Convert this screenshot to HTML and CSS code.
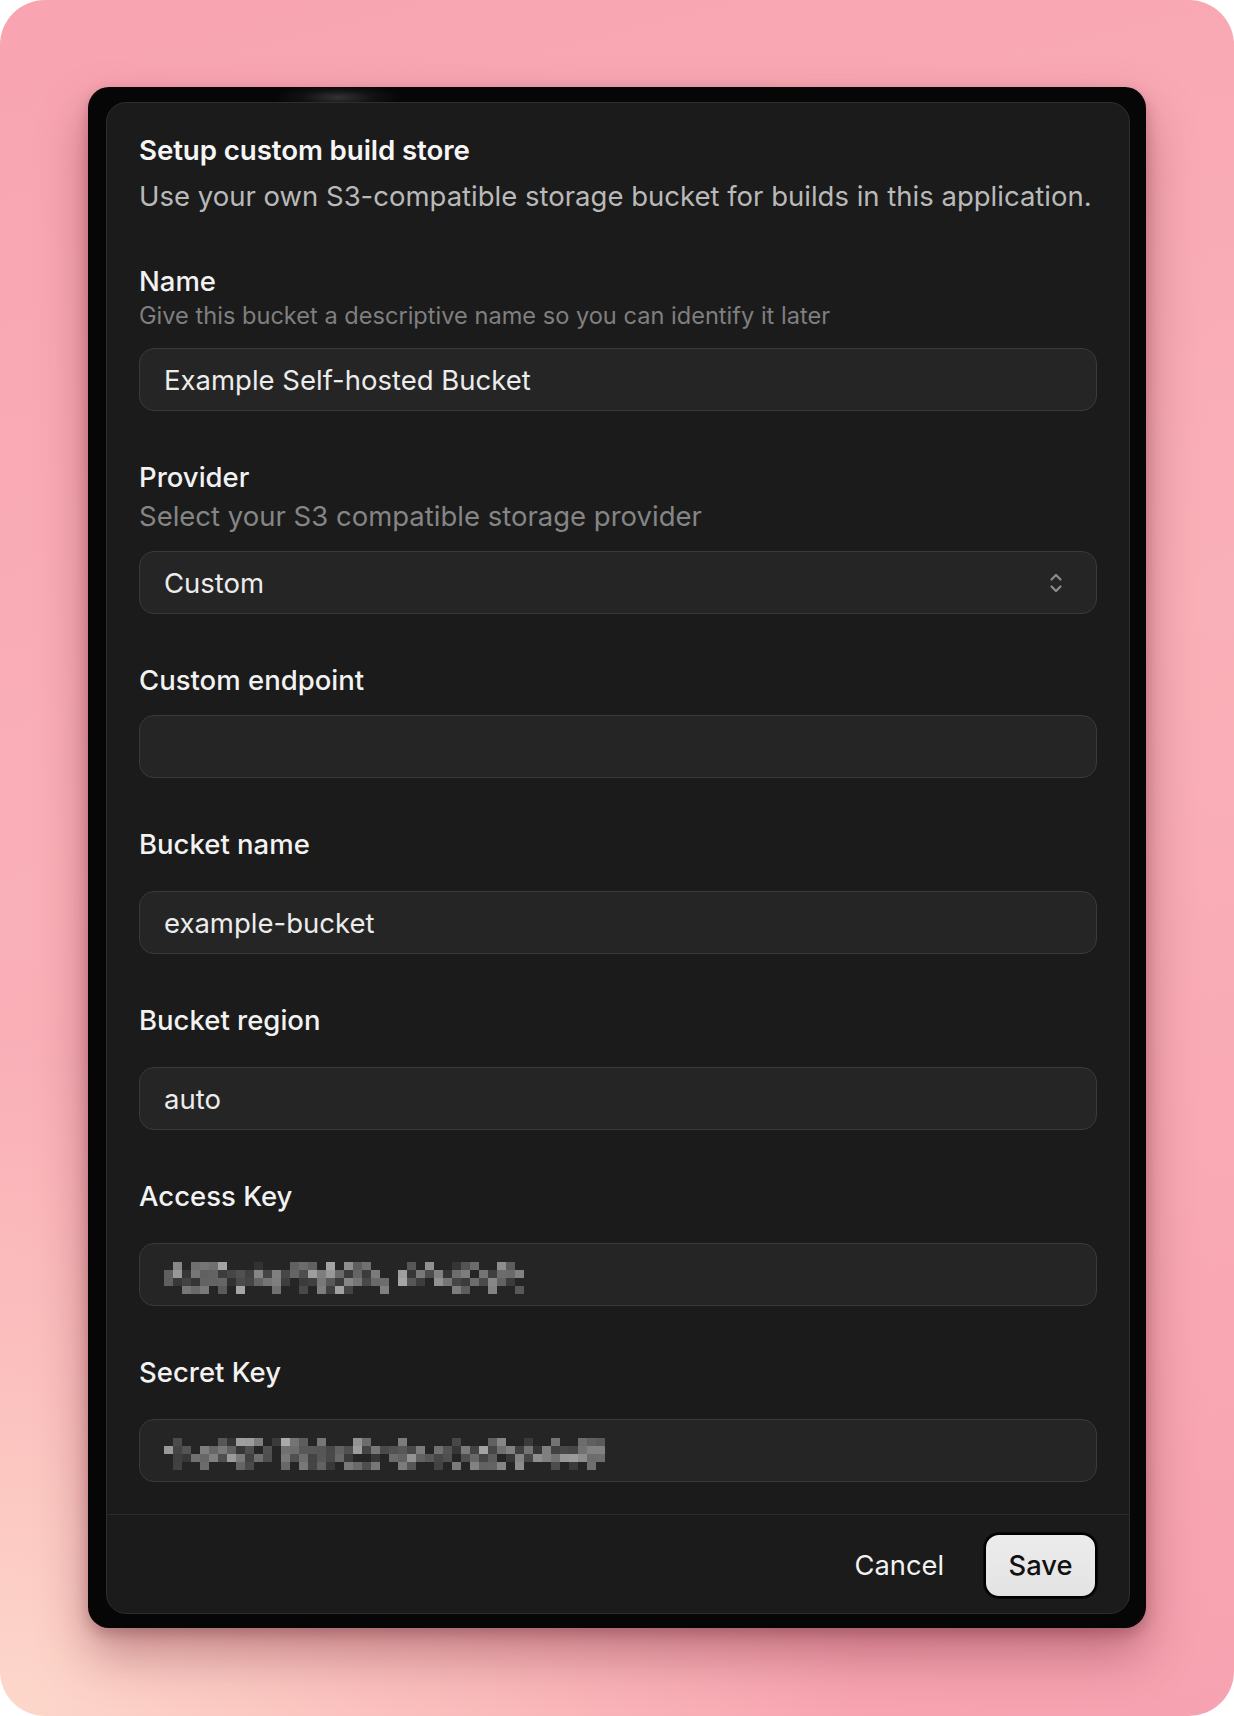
FILE: index.html
```html
<!DOCTYPE html>
<html lang="en">
<head>
<meta charset="utf-8">
<title>Setup custom build store</title>
<link rel="stylesheet" href="styles.css">
</head>
<body>
<div class="screen">
  <div class="frame">
    <div class="glow"></div>
    <div class="dialog">
      <div class="dialog-body">
        <h1 class="title">Setup custom build store</h1>
        <p class="subtitle">Use your own S3-compatible storage bucket for builds in this application.</p>

        <div class="field field-first">
          <div class="label">Name</div>
          <p class="help help-sm">Give this bucket a descriptive name so you can identify it later</p>
          <div class="input input-tight">Example Self-hosted Bucket</div>
        </div>

        <div class="field">
          <div class="label">Provider</div>
          <p class="help help-lg">Select your S3 compatible storage provider</p>
          <div class="input input-tight select">
            <span>Custom</span>
            <svg class="chevrons" width="14" height="24" viewBox="0 0 14 24" fill="none" stroke="#8c8c8c" stroke-width="2.2" stroke-linecap="round" stroke-linejoin="round">
              <path d="M2.5 8.5 L7 4 L11.5 8.5"/>
              <path d="M2.5 15.5 L7 20 L11.5 15.5"/>
            </svg>
          </div>
        </div>

        <div class="field">
          <div class="label">Custom endpoint</div>
          <div class="input input-tight"></div>
        </div>

        <div class="field">
          <div class="label">Bucket name</div>
          <div class="input">example-bucket</div>
        </div>

        <div class="field">
          <div class="label">Bucket region</div>
          <div class="input">auto</div>
        </div>

        <div class="field">
          <div class="label">Access Key</div>
          <div class="input"><span class="redacted" data-cols="40" data-seed="7"></span></div>
        </div>

        <div class="field">
          <div class="label">Secret Key</div>
          <div class="input"><span class="redacted" data-cols="49" data-seed="23"></span></div>
        </div>
      </div>
      <div class="dialog-footer">
        <button class="btn btn-cancel" type="button">Cancel</button>
        <button class="btn btn-save" type="button">Save</button>
      </div>
    </div>
  </div>
</div>
<script src="script.js"></script>
</body>
</html>
```

FILE: styles.css
```css
html, body {
  margin: 0;
  padding: 0;
  background: #ffffff;
}

body {
  font-family: "Inter", "Noto Sans", "Liberation Sans", sans-serif;
  -webkit-font-smoothing: antialiased;
}

.screen {
  width: 1234px;
  height: 1716px;
  box-sizing: border-box;
  padding-top: 87px;
  border-radius: 45px;
  overflow: hidden;
  display: flex;
  justify-content: center;
  align-items: flex-start;
  background:
    radial-gradient(ellipse 70% 40% at 0% 100%, rgba(253, 216, 203, 1) 0%, rgba(253, 214, 200, 0.6) 40%, rgba(253, 214, 200, 0) 100%),
    linear-gradient(165deg, #f8a4b1 0%, #fab0b8 45%, #f9a8b3 80%, #f7a2b0 100%);
}

.frame {
  position: relative;
  width: 1058px;
  box-sizing: border-box;
  padding: 15px 16px 14px 18px;
  background: #060606;
  border-radius: 21px;
  box-shadow: 0 26px 50px rgba(110, 30, 45, 0.4), 0 6px 14px rgba(60, 10, 20, 0.25);
}

.glow {
  position: absolute;
  left: 185px;
  top: 0;
  width: 130px;
  height: 15px;
  background: radial-gradient(ellipse 50% 90% at 50% 70%, rgba(70, 70, 70, 0.7) 0%, rgba(40, 40, 40, 0.35) 55%, rgba(6, 6, 6, 0) 100%);
}

.dialog {
  position: relative;
  background: #1b1b1b;
  border: 1px solid #2e2e2e;
  border-radius: 20px;
  box-sizing: border-box;
  width: 1024px;
}

.dialog-body {
  padding: 30px 32px 32px 32px;
}

.title {
  margin: 0;
  font-size: 27.7px;
  line-height: 34px;
  font-weight: 600;
  color: #f6f6f6;
  letter-spacing: -0.1px;
}

.subtitle {
  margin: 12px 0 0 0;
  font-size: 27.5px;
  line-height: 34px;
  font-weight: 400;
  color: #b9b9b9;
  white-space: nowrap;
}

.field {
  margin-top: 49px;
}

.field-first {
  margin-top: 51px;
}

.label {
  font-size: 27.5px;
  line-height: 34px;
  font-weight: 500;
  color: #f2f2f2;
}

.help {
  margin: 0;
  color: #7f7f7f;
  white-space: nowrap;
}

.help-sm {
  margin-top: 4px;
  font-size: 23.6px;
  line-height: 28px;
}

.help-lg {
  margin-top: 5px;
  font-size: 27.5px;
  line-height: 34px;
  color: #858585;
}

.input {
  margin-top: 30px;
  height: 63px;
  box-sizing: border-box;
  border: 1px solid #3a3a3a;
  border-radius: 15px;
  background: #252525;
  padding: 0 24px;
  display: flex;
  align-items: center;
  font-size: 27.5px;
  color: #ececec;
}

.input-tight {
  margin-top: 18px;
}

.select {
  justify-content: space-between;
  padding-right: 33px;
}

.chevrons {
  display: block;
  flex: none;
}

.redacted {
  display: block;
  margin-top: 7px;
  line-height: 0;
}

.redacted svg {
  display: block;
}

.dialog-footer {
  border-top: 1px solid #2c2c2c;
  padding: 18px 32px 15px 32px;
  display: flex;
  justify-content: flex-end;
  align-items: center;
  gap: 20px;
}

.btn {
  font-family: inherit;
  font-size: 27.3px;
  font-weight: 500;
  height: 65px;
  border-radius: 15px;
  cursor: pointer;
}

.btn-cancel {
  background: transparent;
  border: none;
  color: #f2f2f2;
  padding: 0 20px;
  font-weight: 400;
}

.btn-save {
  width: 113px;
  padding: 0;
  background: linear-gradient(#ececec, #e3e3e3);
  color: #111111;
  border: 2px solid #000000;
  box-shadow: 0 0 0 1px #0a0a0a;
}
```

FILE: script.js
```js
(function () {
  var NS = "http://www.w3.org/2000/svg";
  var cw = 9, ch = 8, rows = 4;
  var rowProb = [0.5, 0.95, 0.9, 0.45];
  var els = document.querySelectorAll(".redacted");
  els.forEach(function (el) {
    var cols = parseInt(el.getAttribute("data-cols"), 10);
    var seed = parseInt(el.getAttribute("data-seed"), 10);
    function rnd() {
      seed = (seed * 1103515245 + 12345) & 0x7fffffff;
      return seed / 0x7fffffff;
    }
    var svg = document.createElementNS(NS, "svg");
    svg.setAttribute("width", cols * cw);
    svg.setAttribute("height", rows * ch);
    svg.setAttribute("viewBox", "0 0 " + cols * cw + " " + rows * ch);
    for (var c = 0; c < cols; c++) {
      for (var r = 0; r < rows; r++) {
        if (rnd() > rowProb[r]) continue;
        var v = Math.round(50 + rnd() * 85);
        if (rnd() < 0.1) v = Math.round(140 + rnd() * 30);
        var hex = v.toString(16);
        if (hex.length < 2) hex = "0" + hex;
        var rect = document.createElementNS(NS, "rect");
        rect.setAttribute("x", c * cw);
        rect.setAttribute("y", r * ch);
        rect.setAttribute("width", cw);
        rect.setAttribute("height", ch);
        rect.setAttribute("fill", "#" + hex + hex + hex);
        svg.appendChild(rect);
      }
    }
    el.appendChild(svg);
  });
})();
```
